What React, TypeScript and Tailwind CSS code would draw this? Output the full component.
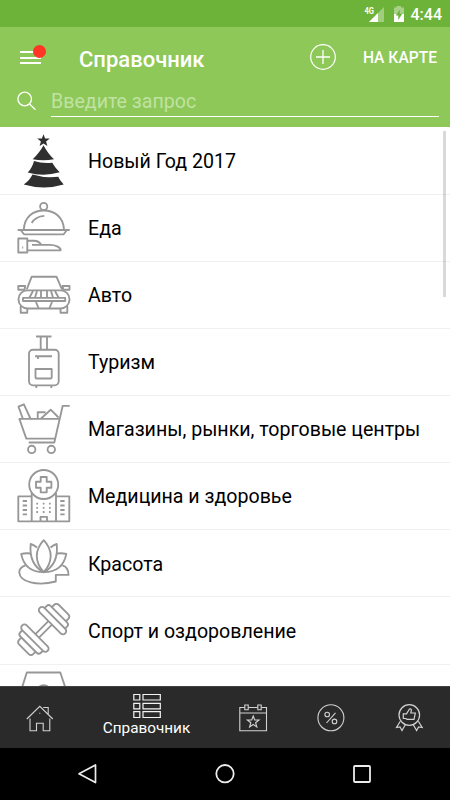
import React from 'react';

const STAR = 'M0-6 1.5-2H5.8L2.4.7 3.6 5 0 2.5-3.6 5-2.4.7-5.8-2H-1.5Z';

function TreeIcon() {
  return (
    <g fill="#2f2f2f" stroke="none">
      <path d={STAR} transform="translate(26.5 6.7) scale(1.08)" />
      <path d="M26.5 11.3C29 16.5 33 21.5 37 25.3Q26 27.3 15.7 25.3C20 21 24 16.5 26.5 11.3Z" />
      <path d="M17 27Q25 29.8 35.3 28.8C37 32 39.5 35 42.7 38.2Q27 43 10.7 38.5C14 35 15.5 32 17 27Z" />
      <path d="M15.500 40.500Q28 44.300 41.300 42.800C42.500 45.500 44.500 48 46.700 50.600Q27 56.500 6.700 50.600C11 47.500 13.500 44.500 15.500 40.500Z" />
    </g>
  );
}

function FoodIcon() {
  return (
    <>
      <circle cx="26.7" cy="5.5" r="3.6" />
      <path d="M6.800 28.500C7.500 16 16 9.500 26.700 9.500S46.300 16 47 28.500" />
      <path d="M.7 29H52.700M4 29.500 7 33.300H46.700L49.500 29.500M14.700 22C17 18 21 15.200 27.300 14.800" />
      <path d="M1.300 37.500H10.300V51.500H1.300ZM5.200 46.500H6.200" />
      <path d="M10.300 39.700H17C21 39.700 22.500 41 24.300 43.700M15 43.900H33C38 43.900 43.500 46 43.700 49.300H10.300" />
    </>
  );
}

function CarIcon() {
  return (
    <>
      <path d="M9.700 21.500 14.700 8.700H39.500L45 21.500M1.300 18H8.200L7.500 21.700H1.300ZM52.500 18H45.600L46.300 21.700H52.500Z" />
      <rect x="1.500" y="22.300" width="51" height="18.200" rx="9" />
      <path d="M6 29.900H48.200V33H6Z" />
      <path d="M12.500 29.500 16 23M18 29.500 20 23M24 29.500V23M30 29.500V23M36 29.500 34 23M41.500 29.500 38 23M19 34 21.500 40M35 34 32.500 40" />
      <path d="M3.700 38V44.700H10.300V40.500M50.300 38V44.700H43.500V40.500" />
    </>
  );
}

function SuitcaseIcon() {
  return (
    <>
      <path d="M19 1.500H34.500M23.700 1.500V14M30 1.500V14M19.300 50.500V53M34.300 50.500V53" />
      <rect x="12" y="14.700" width="29.700" height="35.600" rx="4" />
      <path d="M18 21.200H35M21 21.200V24" />
      <path d="M18.500 34H34.700V42.500Q34.700 43.500 33.500 43.500H19.700Q18.500 43.500 18.500 42.500Z" />
    </>
  );
}

function CartIcon() {
  return (
    <>
      <path d="M52.700 3.800H45.700L37.300 40.500H11.700M1.700 16.800H42.500M2.300 16.800 9.300 36.600H37.500" />
      <path d="M5.800 16.500 1.500 4.700 6.900 2.300 13.400 16.500M20.700 16.500V10.200H28.500M24 16.500 33.700 7.700 41.500 15.500" />
      <circle cx="14.700" cy="47.400" r="3.700" />
      <circle cx="34.300" cy="47.400" r="3.700" />
    </>
  );
}

function HospitalIcon() {
  return (
    <>
      <circle cx="26.700" cy="15.500" r="14.500" />
      <path d="M23.700 8H29.700V12.700H34.400V18.700H29.700V23.300H23.700V18.700H19V12.700H23.700Z" />
      <path d="M14.700 24V52.300M39 24V52.300M14.700 27.300H1.300V52.300H52.300V27.300H39M23.500 52.300V47.800H30V52.300" />
      <path d="M5.700 32H10M5.700 36.500H10M5.700 41H10M5.700 45.300H10M43.300 32H47.600M43.300 36.500H47.600M43.300 41H47.600M43.300 45.300H47.600" />
      <path d="M19.300 34.600H21M25.800 34.600H27.500M32 34.600H33.700M19.300 38.900H21M25.800 38.900H27.500M32 38.900H33.700M19.300 43H21M25.800 43H27.500M32 43H33.700" />
    </>
  );
}

function LotusIcon() {
  return (
    <>
      <path d="M26.700 4.200C17.500 14 17.500 26 26.700 36.200C36 26 36 14 26.700 4.200Z" />
      <path d="M20 11.500Q17 9 13.700 8C12.500 20 15 30 26.700 36.200C38.500 30 41 20 39.700 8Q36.500 9 33.500 11.500" />
      <path d="M13.500 17.500Q9 16.800 4.200 17.800C6 27.500 11 36 26.700 36.200C42.500 36 47.500 27.500 49.300 17.800Q44.500 16.800 40 17.500" />
      <path d="M8.300 29.300C4 31 2 33.500 2.300 36.500C3 46 20 50.500 38.800 45.500V38.900H51.500C51.500 34 50 30.500 45.300 29.300" />
    </>
  );
}

function DumbbellIcon() {
  return (
    <g transform="translate(26.700 26.400) rotate(-45)">
      <path d="M-9.200-2.500H9.200M-9.200 2.500H9.200" />
      <rect x="-15.700" y="-18" width="6.500" height="36" rx="3.200" />
      <path d="M-15.700-14.500H-18.500Q-21.500-14.500-21.500-11.500V11.500Q-21.500 14.500-18.500 14.500H-15.700" />
      <path d="M-21.500-10H-24.500Q-28-10-28-6.500V6.500Q-28 10-24.500 10H-21.500" />
      <rect x="9.200" y="-18" width="6.500" height="36" rx="3.200" />
      <path d="M15.700-14.500H18.500Q21.500-14.500 21.500-11.500V11.500Q21.500 14.500 18.500 14.500H15.700" />
      <path d="M21.500-10H24.500Q28-10 28-6.500V6.500Q28 10 24.500 10H21.500" />
    </g>
  );
}

function ScaleIcon() {
  return (
    <>
      <path d="M3 23 9.800 1.500H43.300L50.500 23" />
      <circle cx="26.700" cy="21.500" r="7.300" fill="#9c9c9c" />
    </>
  );
}

const categories = [
  { title: 'Новый Год 2017', icon: <TreeIcon /> },
  { title: 'Еда', icon: <FoodIcon /> },
  { title: 'Авто', icon: <CarIcon /> },
  { title: 'Туризм', icon: <SuitcaseIcon /> },
  { title: 'Магазины, рынки, торговые центры', icon: <CartIcon /> },
  { title: 'Медицина и здоровье', icon: <HospitalIcon /> },
  { title: 'Красота', icon: <LotusIcon /> },
  { title: 'Спорт и оздоровление', icon: <DumbbellIcon /> },
  { title: '', icon: <ScaleIcon /> },
];

function StatusBar() {
  return (
    <div className="flex h-[27px] shrink-0 items-center justify-end bg-[#6db33a] pr-[8px] text-white">
      <svg width="21" height="18" viewBox="0 0 21 18" className="mr-2">
        <path d="M20 2V17H5Z" fill="#fff" opacity=".35" />
        <path d="M14 8V17H5Z" fill="#fff" />
        <text x="0.500" y="8.500" fontSize="9" fontWeight="700" fill="#fff" textLength="9.500" lengthAdjust="spacingAndGlyphs">4G</text>
      </svg>
      <svg width="12" height="18" viewBox="0 0 12 18" className="mr-[6px]">
        <path d="M1 2.500H3.500V1H8V2.500H11V9H1Z" fill="#fff" opacity=".4" />
        <path d="M1 9H11V17H1Z" fill="#fff" />
        <path d="M7 4.500 2.700 10.500H5.300V15L9.300 8.800H6.700Z" fill="#6db33a" />
      </svg>
      <span className="pt-[3px] text-[16px] leading-none font-medium">4:44</span>
    </div>
  );
}

function Header() {
  return (
    <header className="h-[100px] shrink-0 bg-[#8dc858] text-white">
      <div className="flex h-[60px] items-center pl-5 pr-[13px]">
        <div className="relative h-[14px] w-[21px]">
          <div className="flex h-full flex-col justify-between pt-px">
            <span className="h-[2px] bg-white" />
            <span className="h-[2px] bg-white" />
            <span className="h-[2px] bg-white" />
          </div>
          <span className="absolute -top-[5px] left-[13px] size-[13px] rounded-full bg-[#ff3526]" />
        </div>
        <h1 className="ml-[38px] pt-[5px] text-[22px] leading-none font-medium">Справочник</h1>
        <svg width="28" height="28" viewBox="0 0 28 28" className="ml-auto mr-[26px]" fill="none" stroke="#fff">
          <circle cx="14" cy="14" r="12.300" strokeWidth="1.200" />
          <path d="M14 7V21M7 14H21" strokeWidth="1.300" />
        </svg>
        <span className="pt-[3px] text-[15.600px] leading-none font-medium">НА КАРТЕ</span>
      </div>
      <div className="flex items-start pl-4 pr-[11px]">
        <svg width="22" height="22" viewBox="0 0 22 22" className="mt-1" fill="none" stroke="#fff" strokeWidth="1.300">
          <circle cx="8.700" cy="8" r="6.800" />
          <path d="M13.500 13 19.500 18.700" />
        </svg>
        <div className="ml-[13px] h-[30px] flex-1 border-b border-white pt-[5px] text-[19.600px] leading-none text-[#c0e2a2]">
          Введите запрос
        </div>
      </div>
    </header>
  );
}

function CategoryList() {
  return (
    <main className="relative min-h-0 flex-1 overflow-hidden bg-white pt-[0.500px]">
      {categories.map((item, i) => (
        <div key={i} className="flex h-[67.140px] items-center border-b border-[#f1f0ec] pl-[17px]">
          <svg width="54" height="54" viewBox="0 0 54 54" className="shrink-0" fill="none" stroke="#979797" strokeWidth="1.850" strokeLinejoin="round">
            {item.icon}
          </svg>
          <span className="ml-[17px] pt-[2px] text-[19.600px] leading-none whitespace-nowrap text-black">{item.title}</span>
        </div>
      ))}
      <div className="absolute top-1 right-[4px] h-[166px] w-[3px] bg-black/15" />
    </main>
  );
}

function TabBar() {
  return (
    <nav className="flex h-[62px] shrink-0 items-center border-t border-[#414141] bg-[#2a2a2a] text-white">
      <div className="flex w-[79px] justify-center">
        <svg width="30" height="30" viewBox="0 0 30 30" fill="none" stroke="#d2d2d2" strokeWidth="1.100">
          <path d="M1.800 16 14.800 3.300 27.800 16M18.800 5V4.500H23.200V11" />
          <path d="M5 15.500V27.700H11.500V20.300H18.200V27.700H24.800V15.500M14.300 10.300H15.300" />
        </svg>
      </div>
      <div className="flex w-[135px] flex-col items-center pb-[6px]">
        <svg width="28" height="26" viewBox="0 0 28 26" fill="none" stroke="#f3f3f3" strokeWidth="1.200">
          <path d="M.8 1.500H6.800V7H.8ZM10 1.500H27.300V7H10ZM.8 10.300H6.800V15.800H.8ZM10 10.300H27.300V15.800H10ZM.8 18.700H6.800V24.500H.8ZM10 18.700H27.300V24.500H10Z" />
        </svg>
        <span className="mt-px text-[15.300px] leading-[17px]">Справочник</span>
      </div>
      <div className="flex w-[78px] justify-center">
        <svg width="30" height="30" viewBox="0 0 30 30" fill="none" stroke="#d2d2d2" strokeWidth="1.100">
          <path d="M6.800 4.500H1.800V27.700H28.500V4.500H23.300M10.200 4.500H19.800M1.800 10H28.500" />
          <path d="M6.800 2H10.200V6.800H6.800ZM19.800 2H23.200V6.800H19.800Z" />
          <path d={STAR} transform="translate(15.200 19)" />
        </svg>
      </div>
      <div className="flex w-[78px] justify-center">
        <svg width="30" height="30" viewBox="0 0 30 30" fill="none" stroke="#d2d2d2" strokeWidth="1.100">
          <circle cx="14.900" cy="14.800" r="13" />
          <circle cx="11.200" cy="11.500" r="2.300" />
          <circle cx="18.500" cy="18.400" r="2.300" />
          <path d="M19.500 9.800 10.500 20" />
        </svg>
      </div>
      <div className="flex w-[80px] justify-center">
        <svg width="30" height="30" viewBox="0 0 30 30" fill="none" stroke="#d2d2d2" strokeWidth="1.200">
          <circle cx="14.300" cy="12" r="10.300" />
          <path d="M8.300 10.800H11.500L14.500 6Q16.700 5.500 16.300 8L15.800 10H20.300L19 16.300H12L10.800 15.500H8.300Z" />
          <path d="M5.300 18.200 1.500 24.500 5 24 7 27.500 10.300 21.800M23.300 18.200 27.200 24.500 23.600 24 21.600 27.500 18.300 21.800" />
        </svg>
      </div>
    </nav>
  );
}

function SystemNav() {
  return (
    <div className="flex h-[52px] shrink-0 items-center justify-between bg-black px-[77px]">
      <svg width="22" height="22" viewBox="0 0 22 22" fill="none" stroke="#ececec" strokeWidth="1.700" strokeLinejoin="round">
        <path d="M2 10.800 18.500 2V19.600Z" />
      </svg>
      <svg width="22" height="22" viewBox="0 0 22 22" fill="none" stroke="#ececec" strokeWidth="1.800">
        <circle cx="11" cy="10.700" r="8.700" />
      </svg>
      <svg width="22" height="22" viewBox="0 0 22 22" fill="none" stroke="#ececec" strokeWidth="1.800">
        <rect x="3" y="3" width="16" height="16" rx="1" />
      </svg>
    </div>
  );
}

export default function App() {
  return (
    <div className="flex h-[800px] w-[450px] flex-col overflow-hidden font-[Roboto,sans-serif]">
      <StatusBar />
      <Header />
      <CategoryList />
      <TabBar />
      <SystemNav />
    </div>
  );
}
